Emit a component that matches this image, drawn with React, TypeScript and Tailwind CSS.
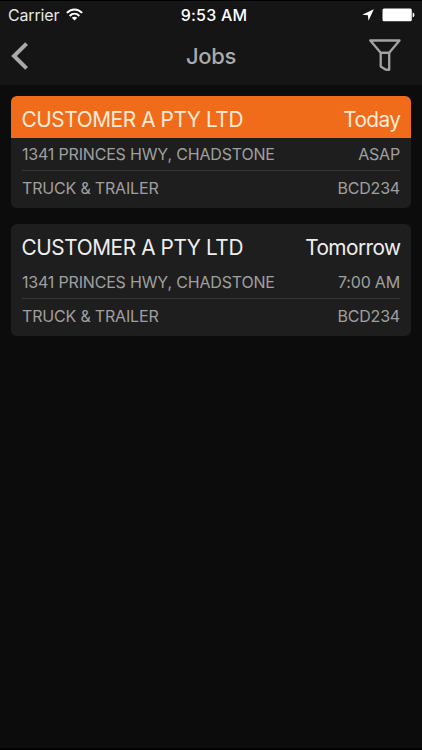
/*
 * Jobs screen: dark list of upcoming jobs.
 * Jobs that are due today get the orange header bar.
 */
import clsx from "clsx";

type Job = {
  customer: string;
  day: string;
  address: string;
  time: string;
  vehicle: string;
  rego: string;
  active?: boolean;
};

const jobs: Job[] = [
  {
    customer: "CUSTOMER A PTY LTD",
    day: "Today",
    address: "1341 PRINCES HWY, CHADSTONE",
    time: "ASAP",
    vehicle: "TRUCK & TRAILER",
    rego: "BCD234",
    active: true,
  },
  {
    customer: "CUSTOMER A PTY LTD",
    day: "Tomorrow",
    address: "1341 PRINCES HWY, CHADSTONE",
    time: "7:00 AM",
    vehicle: "TRUCK & TRAILER",
    rego: "BCD234",
  },
];

function StatusBar() {
  return (
    <div className="grid h-7 grid-cols-[1fr_auto_1fr] items-center pl-2 pr-[7px] text-white">
      <div className="flex items-center gap-[7px]">
        <span className="text-[16px] leading-7 tracking-[-0.15px] text-[#e8e8e8]">Carrier</span>
        <svg className="-mt-[2px]" width="17" height="13" viewBox="0 0 17 13" fill="none" stroke="currentColor" strokeWidth="2.1">
          <path d="M0.9 4.9C5.2 0.3 11.8 0.3 16.1 4.9" />
          <path d="M3.7 7.9C6.5 5.1 10.5 5.1 13.3 7.9" />
          <path d="M8.5 12.6L5.8 9.8C7.4 8.4 9.6 8.4 11.2 9.8Z" fill="currentColor" stroke="none" />
        </svg>
      </div>
      <span className="pl-[5px] text-center text-[16px] font-medium leading-7 tracking-[0.2px]">9:53 AM</span>
      <div className="flex items-center justify-end gap-2">
        <svg className="-mt-px" width="12" height="12" viewBox="0 0 12 12" fill="currentColor">
          <path d="M11.8 0.2L6.5 11.8L5.9 6.3L0.2 5.7Z" />
        </svg>
        <svg className="-mt-px" width="33" height="14" viewBox="0 0 33 14" fill="currentColor">
          <rect x="0.5" y="0.5" width="29.3" height="12.8" rx="1.5" />
          <path d="M30.7 4.4C33 5 33 8.6 30.7 9.2Z" />
        </svg>
      </div>
    </div>
  );
}

function NavBar() {
  return (
    <div className="grid h-[55px] grid-cols-[1fr_auto_1fr] items-center pl-[11px] pr-[21px]">
      <svg className="-mt-px" width="18" height="28" viewBox="0 0 18 28" fill="none" stroke="#aaaaaa" strokeWidth="4">
        <path d="M15.6 1.6L3 14L15.6 26.4" />
      </svg>
      <h1 className="-mt-px pl-[10px] text-center text-[22px] font-medium leading-none tracking-[-0.3px] text-[#aaaaaa]">
        Jobs
      </h1>
      <svg
        className="-mt-1 justify-self-end"
        width="32"
        height="32"
        viewBox="0 0 32 32"
        fill="none"
        stroke="#a3a3a3"
        strokeWidth="2.3"
        strokeLinejoin="round"
      >
        <path d="M1.3 1.5H30.5L20.2 13.8H11.7Z" />
        <path d="M11.7 13.8H20.2V30.8L16.5 30.5L11.7 27.5Z" />
      </svg>
    </div>
  );
}

function JobCard({ job }: { job: Job }) {
  return (
    <li className="h-28 overflow-hidden rounded-[6px] bg-[#1e1e1e]">
      <div
        className={clsx(
          "flex h-[42.5px] items-center justify-between px-[11px] pt-[5px] text-[20.8px]",
          job.active ? "bg-[#f06c1b] text-[#ffebd8]" : "text-[#eeeeee]"
        )}
      >
        <span className="-ml-[0.5px] tracking-[-0.4px]">{job.customer}</span>
        <span className="-mr-[0.5px] tracking-[-0.55px]">{job.day}</span>
      </div>
      <div className="mx-[11px] text-[16px] tracking-[-0.18px] text-[#a0a0a0]">
        <div className="flex h-[33px] items-center justify-between border-b border-[#363636]">
          <span>{job.address}</span>
          <span>{job.time}</span>
        </div>
        <div className="flex h-[33px] items-center justify-between">
          <span>{job.vehicle}</span>
          <span>{job.rego}</span>
        </div>
      </div>
    </li>
  );
}

export default function App() {
  return (
    <div className="flex h-[750px] w-[422px] flex-col border-y border-b-2 border-black bg-[#0c0c0c] font-['Inter',sans-serif]">
      <header className="h-[84px] bg-[#151515]">
        <StatusBar />
        <NavBar />
      </header>
      <ul className="flex flex-col gap-4 px-[11px] pt-[10.5px]">
        {jobs.map((job) => (
          <JobCard key={job.day} job={job} />
        ))}
      </ul>
    </div>
  );
}
